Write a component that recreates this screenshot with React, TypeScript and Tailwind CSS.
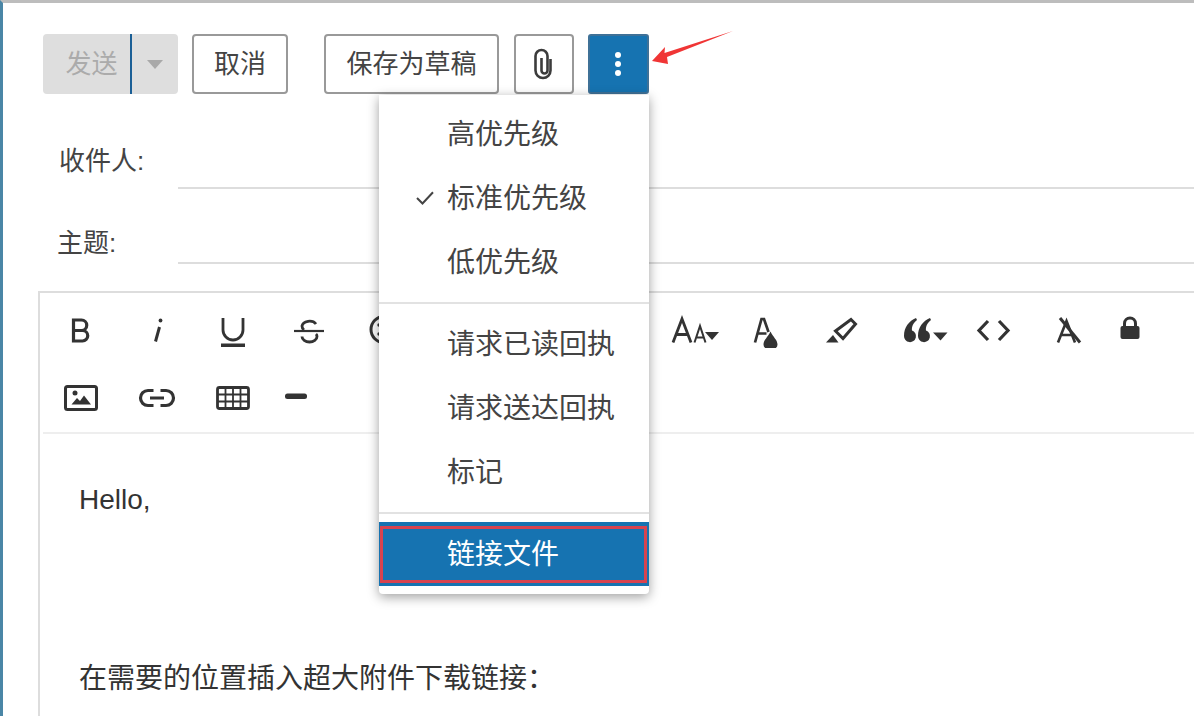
import React from "react";

const INK = "#333333";

function Ico({ cx, cy = 330, w, children }: { cx: number; cy?: number; w: number; children: React.ReactNode }) {
  return (
    <div className="flex shrink-0 items-center justify-center" style={{ width: w }}>
      <svg width={50} height={36} viewBox={`${cx - 25} ${cy - 18} 50 36`} fill="none" stroke={INK} strokeWidth={2.8} className="block shrink-0">
        {children}
      </svg>
    </div>
  );
}

const Fill = { fill: INK, stroke: "none" };

function MenuItem({ label, checked }: { label: string; checked?: boolean }) {
  return (
    <div className="flex h-16 items-center text-[28px] text-[#444444]">
      <div className="w-[68px] shrink-0 pl-[37px]">
        {checked && (
          <svg width={18} height={14} viewBox="0 0 18 14" fill="none" stroke="#444444" strokeWidth={2} className="block">
            <path d="M1 7l5.5 5.5L17 1.2" />
          </svg>
        )}
      </div>
      <span className="pt-[2px]">{label}</span>
    </div>
  );
}

export default function App() {
  const btn = "h-[60px] rounded-[4px] border-2 border-[#999999] bg-white text-[26px] text-[#444444] flex items-center justify-center shrink-0";
  return (
    <div
      className="relative h-[716px] w-[1194px] overflow-hidden border-l-[3px] border-t-[3px] border-l-[#4a86a6] border-t-[#bdbdbd] bg-white"
      style={{ fontFamily: '"Liberation Sans","Noto Sans CJK SC",sans-serif' }}
    >
      {/* Action bar */}
      <div className="flex pl-[40px] pt-[31px]">
        <div className="flex h-[60px] w-[135px] shrink-0 overflow-hidden rounded-[4px] bg-[#dedede]">
          <div className="flex w-[87px] items-center justify-center pl-[10px] text-[26px] text-[#ababab]">发送</div>
          <div className="w-[2px] bg-[#1a5f96]" />
          <div className="flex flex-1 items-center justify-center">
            <svg width={16} height={9} viewBox="0 0 16 9" className="block">
              <polygon points="0,0 16,0 8,9" fill="#a9a9a9" />
            </svg>
          </div>
        </div>
        <div className={`${btn} ml-[14px] w-[96px]`}>取消</div>
        <div className={`${btn} ml-[36px] w-[175px]`}>保存为草稿</div>
        <div className={`${btn} ml-[15px] w-[60px]`}>
          <svg width={22} height={32} viewBox="534 48 22 32" fill="none" stroke="#3c3c3c" strokeWidth={2.6} className="block">
            <path d="M551.5 59v11.5a7.5 7.5 0 0 1-15 0V56a6 6 0 0 1 12 0v14.5a3 3 0 0 1-6 0V58" />
          </svg>
        </div>
        <div className="ml-[14px] flex h-[60px] w-[61px] shrink-0 flex-col items-center justify-center gap-[3px] rounded-[3px] border-2 border-[#3f7197] bg-[#1673b1] pr-[2px]">
          <span className="h-[6px] w-[6px] rounded-full bg-white" />
          <span className="h-[6px] w-[6px] rounded-full bg-white" />
          <span className="h-[6px] w-[6px] rounded-full bg-white" />
        </div>
      </div>

      {/* Address fields */}
      <div className="flex h-[95px] text-[#444444]">
        <div className="w-[175px] shrink-0 pl-[56px] pt-[49px] text-[26px] leading-[36px]">收件人:</div>
        <div className="flex-1 border-b-2 border-[#dddddd]" />
      </div>
      <div className="flex h-[75px] text-[#444444]">
        <div className="w-[175px] shrink-0 pl-[54px] pt-[36px] text-[26px] leading-[36px]">主题:</div>
        <div className="flex-1 border-b-2 border-[#dddddd]" />
      </div>

      {/* Editor */}
      <div className="ml-[35px] mr-[-20px] mt-[27px] h-[500px] border-2 border-[#dddddd] pl-[3px] pt-[3px]">
        <div className="border-b-2 border-[#eeeeee]">
          <div className="flex h-[68px]">
            <Ico cx={81} w={76}><path d="M73.5 320h8a5 5 0 0 1 0 10.5h-8zM73.5 330.500h9a5.2 5.2 0 0 1 0 10.5h-9z" strokeWidth={3.2} /></Ico>
            <Ico cx={157} w={76}>
              <path d="M159.500 327L155.500 341.500" strokeWidth={3} />
              <circle cx={160.500} cy={320.500} r={1.9} {...Fill} />
            </Ico>
            <Ico cx={233} w={76}>
              <path d="M223 318v12a10 10 0 0 0 20 0v-12" strokeWidth={2.8} />
              <rect x={221} y={343.500} width={24} height={3.500} {...Fill} />
            </Ico>
            <Ico cx={309} w={76}>
              <path d="M294 331h30" strokeWidth={2.2} />
              <path d="M316 324a7.500 5.500 0 0 0-14 2q0 2.500 2 4M316 334q1 1 1 2.500a7.500 5.500 0 0 1-15 0" />
            </Ico>
            <Ico cx={385} w={76}>
              <circle cx={384} cy={329.500} r={13} strokeWidth={3} />
              <circle cx={379} cy={325} r={1.7} {...Fill} />
              <circle cx={379} cy={334} r={1.7} {...Fill} />
            </Ico>
            <div className="w-[228px] shrink-0" />
            <Ico cx={695} w={88}>
              <path d="M673 342.500L682 319L691 342.500M676.500 334.500h11" strokeWidth={2.8} />
              <path d="M694.500 342.500L700 326L705.500 342.500M697 337.500h6.500" strokeWidth={2} />
              <polygon points="705,332 719,332 712,340" {...Fill} />
            </Ico>
            <Ico cx={766} w={54}>
              <path d="M755 342.500L761.500 319h2.500L768.500 332M757.500 333.500h9" strokeWidth={2.7} />
              <path d="M770.500 331.500C773 337 777.500 340 777.500 344.500a7 5.500 0 0 1-14 0C763.500 340 768 337 770.500 331.500z" {...Fill} />
            </Ico>
            <Ico cx={842} w={98}>
              <polygon points="851,319.500 855.500,324 843,338.500 835.500,331" strokeWidth={3} />
              <polygon points="826,342.500 833,335 838.500,342.500" {...Fill} />
            </Ico>
            <Ico cx={925} w={68}>
              <path d="M904 336C904 327 909 321 916 318L917 320C913 323 911.500 327 912 330.500A6 6 0 1 1 904 336zM918 336C918 327 923 321 930 318L931 320C927 323 925.500 327 926 330.500A6 6 0 1 1 918 336z" {...Fill} />
              <polygon points="933,332.500 947.500,332.500 940.500,340.500" {...Fill} />
            </Ico>
            <Ico cx={993} w={68}>
              <path d="M988 321L979 330.500L988 340M999 321L1008 330.500L999 340" strokeWidth={3.2} />
            </Ico>
            <Ico cx={1069} w={84}>
              <path d="M1058 342.500L1066.500 321L1075 342.500M1061 335h11.500" strokeWidth={2.6} />
              <path d="M1060 318L1080 342.500" strokeWidth={3} />
            </Ico>
            <Ico cx={1130} w={38}>
              <rect x={1120.500} y={326} width={19} height={13} rx={2} {...Fill} />
              <path d="M1124.500 328v-4.500a5.500 5.500 0 0 1 11 0v4.500" strokeWidth={3} />
            </Ico>
          </div>
          <div className="flex h-[68px]">
            <Ico cx={81} cy={398} w={76}>
              <rect x={65.500} y={386.500} width={31} height={23} rx={2} strokeWidth={3} />
              <circle cx={75} cy={393} r={2.500} {...Fill} />
              <polygon points="71.500,404.500 77,398 80,401 84,395.500 91,404.500" {...Fill} />
            </Ico>
            <Ico cx={157} cy={398} w={76}>
              <path d="M153.500 390.500H148a7.500 7.500 0 0 0 0 15h5.500M160.500 390.500H166a7.500 7.500 0 0 1 0 15h-5.500M150 398h14" strokeWidth={3.2} />
            </Ico>
            <Ico cx={233} cy={398} w={76}>
              <rect x={217.500} y={387.500} width={31} height={21} rx={2} strokeWidth={2.800} />
              <path d="M225.500 388v20M233 388v20M240.500 388v20M218 394.500h30M218 401.500h30" strokeWidth={1.800} />
            </Ico>
            <Ico cx={296} cy={398} w={50}>
              <rect x={285} y={393.500} width={22} height={5.500} rx={2.500} {...Fill} />
            </Ico>
          </div>
        </div>
        <div className="pl-[36px] text-[28px] text-[#333333]">
          <div className="pt-[48px] leading-[36px]">Hello,</div>
          <div className="pt-[143px] leading-[36px]">在需要的位置插入超大附件下载链接：</div>
        </div>
      </div>

      {/* Priority menu */}
      <div className="absolute left-[376px] top-[92px] h-[499px] w-[270px] rounded-b-[4px] bg-white pt-[7px] shadow-[0_3px_12px_rgba(0,0,0,0.38)]">
        <MenuItem label="高优先级" />
        <MenuItem label="标准优先级" checked />
        <MenuItem label="低优先级" />
        <div className="my-2 h-[2px] bg-[#e2e2e2]" />
        <MenuItem label="请求已读回执" />
        <MenuItem label="请求送达回执" />
        <MenuItem label="标记" />
        <div className="my-2 h-[2px] bg-[#e2e2e2]" />
        <div className="bg-[#1673b1] pb-[3px] pl-px pr-[2px] pt-[4px]">
          <div className="flex h-[57px] items-center border-[3px] border-[#d8434f] pl-[64px] text-[28px] text-white">链接文件</div>
        </div>
      </div>

      {/* Annotation arrow */}
      <svg className="absolute left-[646px] top-[25px]" width={90} height={42} viewBox="649 28 90 42">
        <polygon points="652,61 665,47 664.500,53 733,31 667,57 668,64" fill="#f03535" />
      </svg>
    </div>
  );
}
